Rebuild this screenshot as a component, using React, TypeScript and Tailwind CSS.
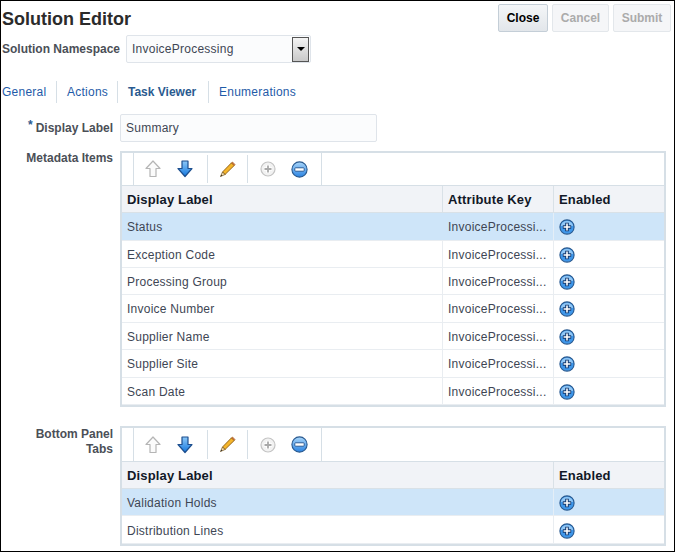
const FONT = "font-['Liberation_Sans',Arial,sans-serif]";

function UpArrow() {
  return (
    <svg width="16" height="18" viewBox="0 0 16 18">
      <path d="M8 1 L15 8.5 L11 8.5 L11 16.5 L5 16.5 L5 8.5 L1 8.5 Z" fill="#fbfbfb" stroke="#b5b5b5" strokeWidth="1.2" strokeLinejoin="round" />
    </svg>
  );
}

function DownArrow() {
  return (
    <svg width="16" height="18" viewBox="0 0 16 18">
      <defs>
        <linearGradient id="downGrad" x1="0" y1="0" x2="0" y2="1">
          <stop offset="0" stopColor="#8cc8f8" />
          <stop offset="1" stopColor="#1377de" />
        </linearGradient>
      </defs>
      <path d="M5 1 L11 1 L11 8.5 L15 8.5 L8 16.5 L1 8.5 L5 8.5 Z" fill="url(#downGrad)" stroke="#1d4f8f" strokeWidth="1.2" strokeLinejoin="round" />
    </svg>
  );
}

function Pencil() {
  return (
    <svg width="17" height="17" viewBox="0 0 17 17">
      <path d="M3.5 11 L12.5 1.8 L15.2 4.5 L6 13.5 Z" fill="#f5b52a" stroke="#8a5a10" strokeWidth="0.9" strokeLinejoin="round" />
      <path d="M12.5 1.8 L15.2 4.5 L16 3.5 L13.5 1 Z" fill="#e8734a" stroke="#8a5a10" strokeWidth="0.6" />
      <path d="M3.5 11 L6 13.5 L1.5 15.5 Z" fill="#f4deb0" stroke="#6b4a12" strokeWidth="0.7" strokeLinejoin="round" />
      <path d="M1.5 15.5 L3.2 14.7 L2.3 13.8 Z" fill="#222" />
    </svg>
  );
}

function DisabledPlus() {
  return (
    <svg width="16" height="16" viewBox="0 0 16 16">
      <circle cx="8" cy="8" r="7" fill="#f2f2f2" stroke="#c4c4c4" strokeWidth="1.2" />
      <path d="M8 4 V12 M4 8 H12" stroke="#ffffff" strokeWidth="3.6" />
      <path d="M8 4.5 V11.5 M4.5 8 H11.5" stroke="#a9a9a9" strokeWidth="1.8" />
    </svg>
  );
}

function MinusCircle() {
  return (
    <svg width="17" height="17" viewBox="0 0 17 17">
      <defs>
        <linearGradient id="minusGrad" x1="0" y1="0" x2="0" y2="1">
          <stop offset="0" stopColor="#a9d6fa" />
          <stop offset="1" stopColor="#2a83e2" />
        </linearGradient>
      </defs>
      <circle cx="8.5" cy="8.5" r="7.6" fill="url(#minusGrad)" stroke="#27588f" strokeWidth="1.1" />
      <rect x="3.8" y="6.8" width="9.4" height="3.4" rx="0.8" fill="#ffffff" stroke="#1e4f8c" strokeWidth="0.9" />
    </svg>
  );
}

function PlusCircle() {
  return (
    <svg width="16" height="16" viewBox="0 0 16 16">
      <circle cx="8" cy="8" r="7.1" fill="#3f97ea" stroke="#27588f" strokeWidth="1.1" />
      <path d="M2 7 A6 5 0 0 1 14 7 Z" fill="#a5d3f9" opacity="0.8" />
      <path d="M8 3.8 V12.2 M3.8 8 H12.2" stroke="#14396e" strokeWidth="3.6" />
      <path d="M8 4.6 V11.4 M4.6 8 H11.4" stroke="#ffffff" strokeWidth="1.6" />
    </svg>
  );
}

function Toolbar({ h }: { h: string }) {
  return (
    <div className={`flex border-b border-[#d6dfe6] ${h}`}>
      <div className="w-[11px] border-r border-[#d6dfe6] ml-px" />
      <div className="flex items-center w-[74px] border-r border-[#d6dfe6] pl-[11px] gap-[16px] my-[2px]">
        <UpArrow />
        <DownArrow />
      </div>
      <div className="flex items-center justify-center w-[40px] border-r border-[#d6dfe6] my-[2px]">
        <Pencil />
      </div>
      <div className="flex items-center w-[74px] border-r border-[#d6dfe6] pl-[12px] gap-[15px]">
        <DisabledPlus />
        <MinusCircle />
      </div>
    </div>
  );
}

function TableHeader({ attr }: { attr?: boolean }) {
  return (
    <div className="flex h-[27px] bg-[#f1f3f7] border-b border-[#d9e1e7] text-[13px] tracking-[0.15px] font-bold text-[#111827] leading-[28px]">
      <div className="flex-1 pl-[5px] min-w-0">Display Label</div>
      {attr && <div className="w-[111px] pl-[5px] border-l border-[#d9e1e7]">Attribute Key</div>}
      <div className="w-[111px] pl-[5px] border-l border-[#d9e1e7]">Enabled</div>
    </div>
  );
}

function Row({ label, attr, selected, h, low }: { label: string; attr?: boolean; selected?: boolean; h: string; low?: boolean }) {
  const pad = low ? 'pt-[2px]' : '';
  return (
    <div className={`flex border-b border-[#e9edf1] text-[12px] tracking-[0.25px] text-[#3e4654] ${h} ${selected ? 'bg-[#cee5f9]' : 'bg-white'}`}>
      <div className={`flex-1 flex items-center pl-[5px] min-w-0 ${pad}`}>{label}</div>
      {attr && <div className={`w-[111px] flex items-center pl-[5px] border-l ${pad} ${selected ? 'border-[#cee5f9]' : 'border-[#e9edf1]'}`}>InvoiceProcessi...</div>}
      <div className={`w-[111px] flex items-center pl-[5px] border-l ${pad} ${selected ? 'border-[#e4eef7]' : 'border-[#e9edf1]'}`}>
        <PlusCircle />
      </div>
    </div>
  );
}

const metadata = [
  { label: 'Status', h: 'h-[28px]', selected: true, low: false },
  { label: 'Exception Code', h: 'h-[27px]', low: true },
  { label: 'Processing Group', h: 'h-[27px]', low: true },
  { label: 'Invoice Number', h: 'h-[28px]' },
  { label: 'Supplier Name', h: 'h-[27px]', low: true },
  { label: 'Supplier Site', h: 'h-[28px]' },
  { label: 'Scan Date', h: 'h-[27px]', low: true },
];

export default function App() {
  return (
    <div className={`w-[675px] h-[552px] bg-white border border-black overflow-hidden text-[12px] ${FONT}`}>
      <div className="flex justify-between pt-[3px] pr-[3px] h-[34px]">
        <h1 className="pl-px pt-[4px] text-[18px] leading-[22px] font-bold text-[#2b2b2b]">Solution Editor</h1>
        <div className="flex gap-[4px] text-[12px] font-bold">
          <button className="w-[50px] h-[28px] rounded-[2px] border border-[#c4ced7] bg-gradient-to-b from-[#f4f6f8] to-[#e2e6ea] text-black">Close</button>
          <button className="w-[57px] h-[28px] rounded-[2px] border border-[#e3e7eb] bg-[#f5f6f8] text-[#ababab]">Cancel</button>
          <button className="w-[58px] h-[28px] rounded-[2px] border border-[#e3e7eb] bg-[#f5f6f8] text-[#ababab]">Submit</button>
        </div>
      </div>

      <div className="flex items-center h-[28px]">
        <div className="pl-[1px] w-[125px] font-bold text-[#4b4f57]">Solution Namespace</div>
        <div className="flex items-center justify-between w-[185px] h-[28px] pl-[5px] pr-[1px] rounded-[2px] border border-[#dfe4ea] bg-[#fbfcfd] text-[12px] tracking-[0.25px] text-[#3e4654]">
          <span>InvoiceProcessing</span>
          <div className="flex items-center justify-center w-[17px] h-[25px] border border-[#555] bg-gradient-to-b from-[#f4f4f4] to-[#c9c9c9]">
            <div className="w-0 h-0 border-x-[4px] border-x-transparent border-t-[4px] border-t-black" />
          </div>
        </div>
      </div>

      <div className="flex items-center h-[22px] mt-[18px] text-[#1f5ba8] tracking-[0.25px]">
        <div className="w-[56px] h-full pl-px border-r border-[#d6dfe6] leading-[22px]">General</div>
        <div className="w-[61px] h-full pl-[10px] border-r border-[#d6dfe6] leading-[22px]">Actions</div>
        <div className="w-[91px] h-full pl-[10px] border-r border-[#d6dfe6] leading-[22px] font-bold tracking-normal text-[#2a5a8f]">Task Viewer</div>
        <div className="pl-[10px] leading-[22px]">Enumerations</div>
      </div>

      <div className="flex items-center h-[28px] mt-[11px]">
        <div className="w-[119px] pr-[7px] text-right font-bold text-[#4b4f57]">
          <span className="relative top-[-3px] mr-[3px] text-[#2a5a8f]">*</span>Display Label
        </div>
        <div className="flex items-center w-[257px] h-[28px] pl-[5px] rounded-[2px] border border-[#dfe4ea] bg-[#fbfcfd] text-[12px] tracking-[0.25px] text-[#3e4654]">Summary</div>
      </div>

      <div className="flex mt-[9px]">
        <div className="w-[119px] pr-[7px] text-right font-bold text-[#4b4f57] leading-[14px]">Metadata Items</div>
        <div className="w-[546px] h-[256px] border-2 border-[#d6dfe6]">
          <Toolbar h="h-[33px]" />
          <TableHeader attr />
          {metadata.map((row) => (
            <Row key={row.label} label={row.label} h={row.h} selected={row.selected} low={row.low} attr />
          ))}
        </div>
      </div>

      <div className="flex mt-[19px]">
        <div className="w-[119px] pr-[7px] pt-[1px] text-right font-bold text-[#4b4f57] leading-[15px]">Bottom Panel<br />Tabs</div>
        <div className="w-[546px] h-[120px] border-2 border-[#d6dfe6]">
          <Toolbar h="h-[34px]" />
          <TableHeader />
          <Row label="Validation Holds" h="h-[27px]" selected low />
          <Row label="Distribution Lines" h="h-[28px]" low />
        </div>
      </div>
    </div>
  );
}
